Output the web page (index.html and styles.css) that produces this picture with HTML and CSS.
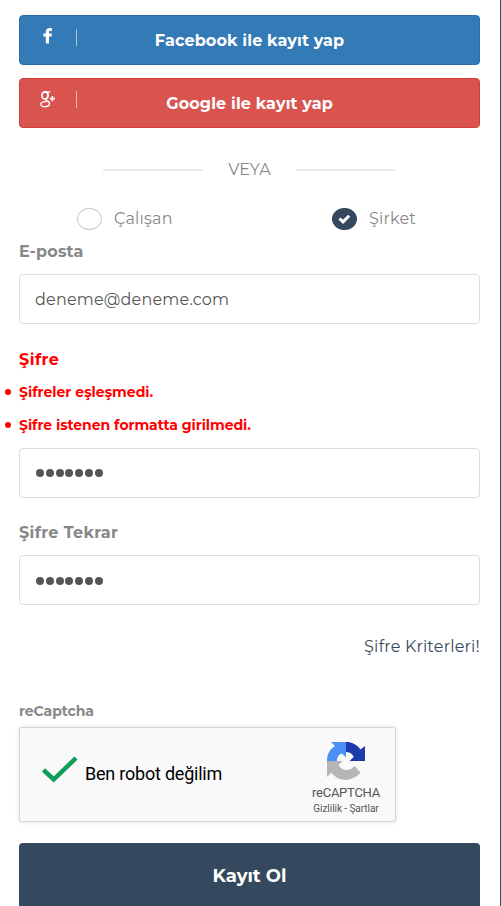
FILE: index.html
```html
<!DOCTYPE html>
<html lang="tr">
<head>
<meta charset="utf-8">
<title>Kayıt Ol</title>
<link rel="stylesheet" href="styles.css">
</head>
<body>
<form class="signup">
  <button type="button" class="social facebook">
    <span class="social-icon"><svg width="10" height="16" viewBox="0 0 10 16"><path fill="#fff" d="M8.900 0v3H7.200C6.300 3 6 3.300 6 4.100v1.400h2.900l-.4 3H6V15.400H2.800V8.500H.4V5.500h2.400V3.700C2.800 1.300 4.300-.1 6.600-.1c1 0 1.900 0 2.300.1z"/></svg></span>
    <span class="social-text">Facebook ile kayıt yap</span>
  </button>
  <button type="button" class="social google">
    <span class="social-icon"><svg width="16" height="17" viewBox="0 0 16 17" fill="none" stroke="#fff"><ellipse cx="4.900" cy="4.400" rx="3" ry="3.600" stroke-width="1.700"/><path stroke-width="1.300" d="M5 .8h5.300M7.300 1.500c1.500 1.600 1.300 4-.4 5.500-1.600 1.300-1.700 1.700.2 2.700 4 2.100 2.900 6-2.200 6-5.500 0-5.500-4.800.2-5.100h1.600"/><path stroke-width="1.600" d="M12.400 5v5.200M9.800 7.600h5.200"/></svg></span>
    <span class="social-text">Google ile kayıt yap</span>
  </button>
  <div class="divider"><span class="rule"></span><span class="veya">VEYA</span><span class="rule"></span></div>
  <div class="roles">
    <div class="role"><span class="radio"></span><span class="role-name calisan">Çalışan</span></div>
    <div class="role"><span class="radio checked"><svg width="13" height="11" viewBox="0 0 13 11"><path d="M1.500 4.500l3.500 3.300 6.200-6.100" fill="none" stroke="#fff" stroke-width="3"/></svg></span><span class="role-name sirket">Şirket</span></div>
  </div>
  <div class="label"><span class="eposta">E-posta</span></div>
  <div class="field"><span class="email">deneme@deneme.com</span></div>
  <div class="label invalid"><span class="sifre">Şifre</span></div>
  <ul class="errors">
    <li><span>Şifreler eşleşmedi.</span></li>
    <li><span class="err-two">Şifre istenen formatta girilmedi.</span></li>
  </ul>
  <div class="field password first"><i></i><i></i><i></i><i></i><i></i><i></i><i></i></div>
  <div class="label repeat"><span class="tekrar">Şifre Tekrar</span></div>
  <div class="field password"><i></i><i></i><i></i><i></i><i></i><i></i><i></i></div>
  <div class="criteria"><span class="kriter">Şifre Kriterleri!</span></div>
  <div class="label captcha-label"><span class="recap">reCaptcha</span></div>
  <div class="captcha">
    <svg class="tick" width="36" height="28" viewBox="0 0 36 28"><path d="M1.500 14l10.200 9.500L34 2" fill="none" stroke="#0f9d58" stroke-width="4.500"/></svg>
    <span class="robot">Ben robot değilim</span>
    <div class="brand">
      <svg width="38" height="38" viewBox="0 0 38 38">
        <path fill="#4a90f5" d="M19 0v15.500L15 11.500C11.500 12.500 10 15.500 10 19H0C0 12 3 7 8 4L4 0z"/>
        <path fill="#1c3aa9" d="M19 0c6 0 11 2.500 14.500 7.500L38 4v15H22.500l4.200-4C25.500 11.500 22.500 10 19 10z"/>
        <path fill="#b5b5b5" d="M0 19h15.500L11.500 23c3 6 11 7 16 1l6 6.500C25 41 10 39.500 4.500 30.500L0 35z"/>
      </svg>
      <span class="brand-name">reCAPTCHA</span>
      <span class="brand-links">Gizlilik - Şartlar</span>
    </div>
  </div>
  <button type="button" class="submit">Kayıt Ol</button>
</form>
</body>
</html>
```
FILE: styles.css
```css
* { box-sizing: border-box; }
body { margin: 0; background: #fff; overflow: hidden; }
.signup {
  height: 906px;
  overflow: hidden;
  padding: 15px 20px 0 19px;
  border-right: 1px solid #34495e;
  font: 16px/24px Montserrat, Inter, "Open Sans", sans-serif;
  color: #888;
  display: flex;
  flex-direction: column;
  white-space: nowrap;
}
.signup > * { flex-shrink: 0; }
button { font: inherit; color: #fff; padding: 0; }
.social {
  display: grid;
  grid-template-columns: 57px 1fr 57px;
  height: 50px;
  border: 1px solid;
  border-radius: 4px;
  font-weight: 700;
  margin-bottom: 13px;
}
.facebook { background: #337ab7; border-color: #2e6da4; }
.google { background: #d9534f; border-color: #d43f3a; margin-bottom: 29px; }
.social-icon {
  height: 17px;
  margin-top: 13px;
  border-right: 1px solid #ffffff90;
  display: flex;
  justify-content: center;
  align-items: flex-start;
  padding-right: 1px;
}
.facebook .social-icon svg { position: relative; top: -1px; overflow: visible; }
.google .social-icon { margin-top: 12px; }
.social-text { align-self: center; text-align: center; padding-top: 2px; letter-spacing: .12px; }
.divider { display: flex; align-items: center; justify-content: center; height: 24px; gap: 25px; margin-bottom: 26px; }
.veya { padding-top: 2px; }
.rule { width: 100px; height: 2px; background: #ebebeb; position: relative; top: 1px; }
.roles { display: flex; height: 24px; margin-bottom: 9px; padding-left: 58px; }
.role { display: flex; align-items: center; width: 255px; gap: 12px; }
.role + .role { width: auto; }
.radio { width: 25px; height: 22px; border: 1px solid #ccc; border-radius: 50%; display: flex; align-items: center; justify-content: center; }
.checked { background: #34495e; border-color: #34495e; }
.calisan { letter-spacing: .2px; }
.sirket { letter-spacing: .2px; }
.label { height: 24px; font-weight: 700; margin-bottom: 10px; }
.eposta { letter-spacing: .2px; }
.field { height: 50px; border: 1px solid #ddd; border-radius: 4px; padding: 0 15px; display: flex; align-items: center; color: #555; }
.email { letter-spacing: .2px; padding-top: 2px; }
.invalid { color: red; margin: 24px 0 4px; }
.sifre { letter-spacing: .45px; }
.tekrar { letter-spacing: .34px; }
.errors { margin: 0 0 6px; padding: 0; list-style: none; color: red; font-size: 14px; font-weight: 700; line-height: 33px; }
.errors li { display: flex; align-items: center; margin-left: -14px; gap: 8px; }
.errors li::before { content: ""; width: 6px; height: 6px; border-radius: 50%; background: red; position: relative; top: -1px; }
.err-two { letter-spacing: -.05px; }
.password { padding: 1px 0 0 16px; gap: 1.800px; }
.first { padding-top: 0; }
.password i { width: 8px; height: 8px; border-radius: 50%; background: #555; }
.repeat { margin-top: 23px; }
.criteria { margin: 30px 0 41px; text-align: right; color: #34495e; }
.kriter { letter-spacing: .22px; }
.captcha-label { font-size: 14px; height: 22px; line-height: 22px; margin-bottom: 5px; }
.recap { letter-spacing: -.08px; }
.captcha {
  width: 377px;
  height: 95px;
  background: #f9f9f9;
  border: 1px solid #d3d3d3;
  border-radius: 3px;
  box-shadow: 0 0 4px 1px rgba(0,0,0,.08);
  display: flex;
  align-items: flex-start;
  padding-left: 21.500px;
  font-family: Roboto, sans-serif;
  margin-bottom: 21px;
}
.tick { margin: 28px 7.500px 0 0; }
.robot { color: #000; font-size: 18px; letter-spacing: -.22px; margin-top: 34px; width: 218px; }
.brand { display: flex; flex-direction: column; align-items: center; margin-top: 14px; width: 86px; color: #555; }
.brand-name { font-size: 13px; letter-spacing: -.25px; line-height: 16px; margin-top: 5px; }
.brand-links { font-size: 10px; letter-spacing: -.05px; line-height: 14px; margin-top: 1px; }
.submit { height: 66px; border: 0; border-radius: 4px; background: #34495e; font-size: 18px; font-weight: 700; }
```
